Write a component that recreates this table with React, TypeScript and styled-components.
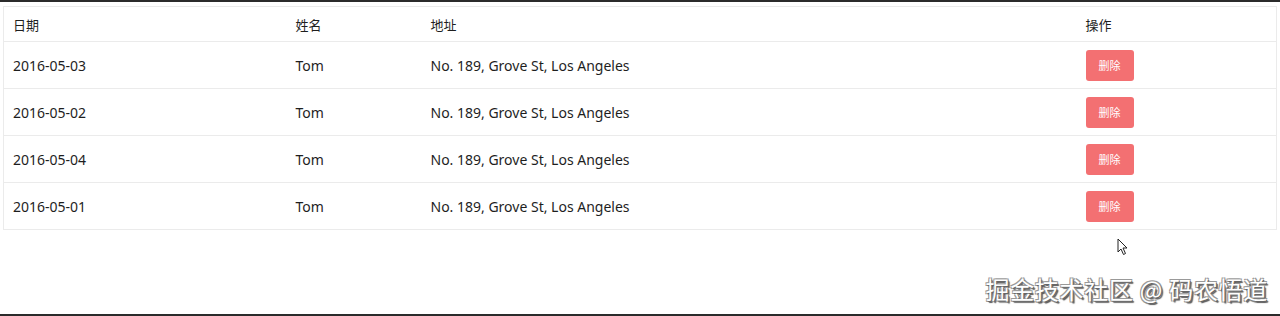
import React from 'react';
import styled, { createGlobalStyle } from 'styled-components';

const GlobalStyle = createGlobalStyle`
  html, body {
    margin: 0;
    padding: 0;
    background: #fff;
  }
  body {
    font-family: "Noto Sans", "Noto Sans CJK SC", sans-serif;
    color: #1e1e1e;
  }
`;

const Page = styled.div`
  position: relative;
  width: 1280px;
  height: 316px;
  box-sizing: border-box;
  border-top: 2px solid #2b2b2b;
  border-bottom: 2px solid #2b2b2b;
  padding: 4px 4px 0 3px;
  overflow: hidden;
`;

const Table = styled.table`
  width: 1273px;
  table-layout: fixed;
  border-collapse: collapse;
  border: 1px solid #ebebeb;
  font-size: 14px;
`;

const HeadCell = styled.th<{ $w: number }>`
  box-sizing: border-box;
  width: ${p => p.$w}px;
  height: 35px;
  padding: 0 9px;
  text-align: left;
  font-weight: normal;
  font-size: 13px;
  color: #1e1e1e;
  border-bottom: 1px solid #ebebeb;
`;

const Row = styled.tr`
  border-bottom: 1px solid #ebebeb;
`;

const Cell = styled.td`
  height: 46px;
  padding: 0 9px;
  white-space: nowrap;
`;

const DeleteButton = styled.button`
  width: 48px;
  height: 31px;
  border: none;
  border-radius: 3px;
  background: #f37072;
  color: #fff;
  font-family: "Noto Sans CJK SC", sans-serif;
  font-size: 11px;
  padding: 0;
  display: flex;
  align-items: center;
  justify-content: center;
`;

const Watermark = styled.div`
  position: absolute;
  right: 12px;
  bottom: 8px;
  font-family: "Noto Sans CJK SC", sans-serif;
  font-size: 24px;
  color: #fff;
  letter-spacing: 0.7px;
  text-shadow:
    1px 1px 0 #666, -1px -1px 0 #999, 1px -1px 0 #999, -1px 1px 0 #999,
    2px 2px 1px #555;
`;

const Cursor = styled.svg`
  position: absolute;
  left: 1117px;
  top: 236px;
`;

const columns = [
  { title: '日期', w: 283 },
  { title: '姓名', w: 135 },
  { title: '地址', w: 655 },
  { title: '操作', w: 200 },
];

const rows = [
  { date: '2016-05-03', name: 'Tom', address: 'No. 189, Grove St, Los Angeles' },
  { date: '2016-05-02', name: 'Tom', address: 'No. 189, Grove St, Los Angeles' },
  { date: '2016-05-04', name: 'Tom', address: 'No. 189, Grove St, Los Angeles' },
  { date: '2016-05-01', name: 'Tom', address: 'No. 189, Grove St, Los Angeles' },
];

export default function App() {
  return (
    <>
      <GlobalStyle />
      <Page>
        <Table>
          <thead>
            <tr>
              {columns.map(c => (
                <HeadCell key={c.title} $w={c.w}>{c.title}</HeadCell>
              ))}
            </tr>
          </thead>
          <tbody>
            {rows.map(r => (
              <Row key={r.date}>
                <Cell>{r.date}</Cell>
                <Cell>{r.name}</Cell>
                <Cell>{r.address}</Cell>
                <Cell>
                  <DeleteButton>删除</DeleteButton>
                </Cell>
              </Row>
            ))}
          </tbody>
        </Table>
        <Cursor width="12" height="18" viewBox="0 0 12 18">
          <path d="M1 1 L1 14 L4 11 L6.5 16.5 L8.5 15.5 L6 10 L10 10 Z" fill="#fff" stroke="#222" strokeWidth="1" strokeLinejoin="round" />
        </Cursor>
        <Watermark>掘金技术社区 @ 码农悟道</Watermark>
      </Page>
    </>
  );
}
